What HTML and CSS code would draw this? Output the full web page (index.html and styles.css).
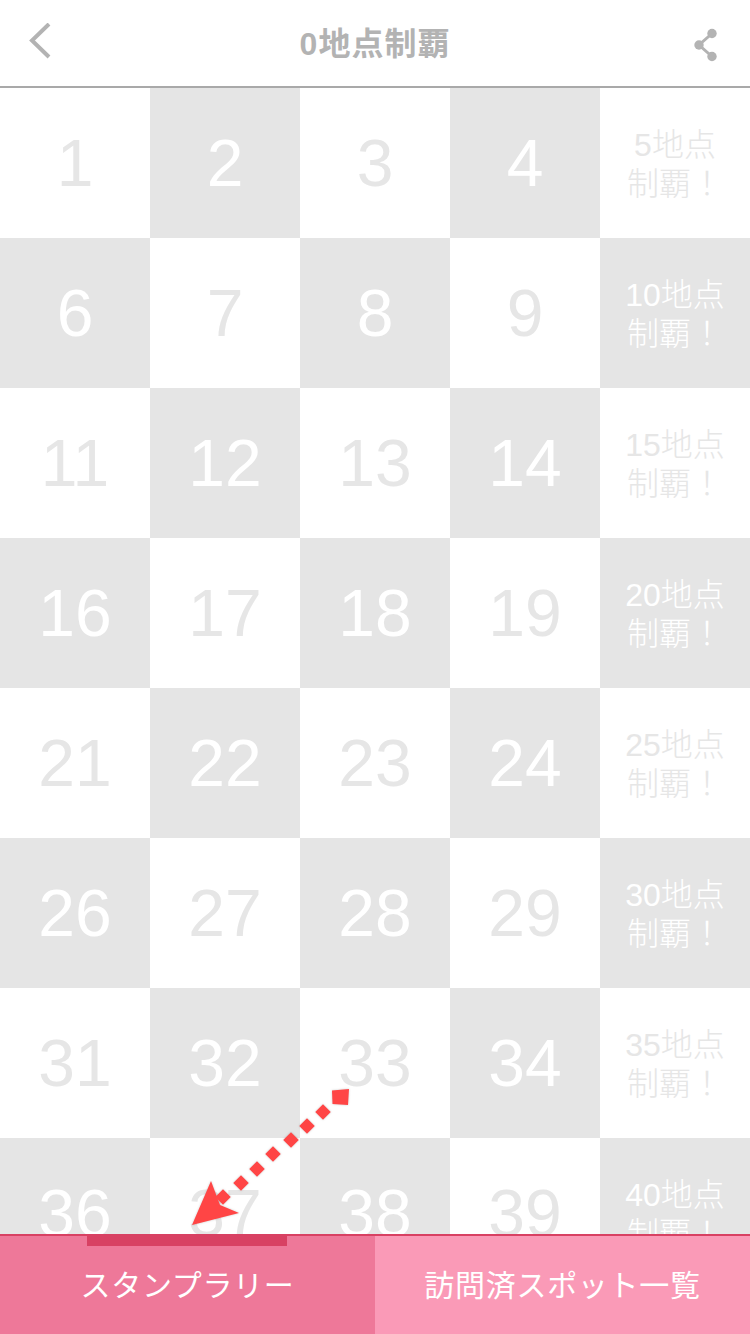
FILE: index.html
```html
<!DOCTYPE html>
<html lang="ja">
<head>
    <meta charset="UTF-8">
    <meta name="viewport" content="width=device-width, initial-scale=1.0">
    <title>0地点制覇</title>
    <link rel="stylesheet" href="styles.css">
</head>
<body>
    <div class="page">
        <header class="nav-bar">
            <svg class="nav-icon" width="28" height="36" viewBox="0 0 28 36">
                <path d="M21 1 L4 17.5 L21 34" fill="none" stroke="#b3b3b3" stroke-width="4"/>
            </svg>
            <h1 class="nav-title">0地点制覇</h1>
            <svg class="nav-icon nav-share" width="28" height="36" viewBox="0 0 28 36">
                <path d="M18 6.5 L5 18 L18 29.5" fill="none" stroke="#b3b3b3" stroke-width="3"/>
                <circle cx="18" cy="6.5" r="4.7" fill="#b3b3b3"/>
                <circle cx="5" cy="18" r="4.7" fill="#b3b3b3"/>
                <circle cx="18" cy="29.5" r="4.7" fill="#b3b3b3"/>
            </svg>
        </header>

        <main class="stamp-area">
            <div class="stamp-grid">
                <div class="cell">1</div><div class="cell">2</div><div class="cell">3</div><div class="cell">4</div>
                <div class="cell goal">5地点<br>制覇！</div>
                <div class="cell">6</div><div class="cell">7</div><div class="cell">8</div><div class="cell">9</div>
                <div class="cell goal">10地点<br>制覇！</div>
                <div class="cell">11</div><div class="cell">12</div><div class="cell">13</div><div class="cell">14</div>
                <div class="cell goal">15地点<br>制覇！</div>
                <div class="cell">16</div><div class="cell">17</div><div class="cell">18</div><div class="cell">19</div>
                <div class="cell goal">20地点<br>制覇！</div>
                <div class="cell">21</div><div class="cell">22</div><div class="cell">23</div><div class="cell">24</div>
                <div class="cell goal">25地点<br>制覇！</div>
                <div class="cell">26</div><div class="cell">27</div><div class="cell">28</div><div class="cell">29</div>
                <div class="cell goal">30地点<br>制覇！</div>
                <div class="cell">31</div><div class="cell">32</div><div class="cell">33</div><div class="cell">34</div>
                <div class="cell goal">35地点<br>制覇！</div>
                <div class="cell">36</div><div class="cell">37</div><div class="cell">38</div><div class="cell">39</div>
                <div class="cell goal">40地点<br>制覇！</div>
            </div>

            <!-- annotation arrow over the grid, coordinates relative to stamp-area -->
            <svg class="arrow" width="190" height="146" viewBox="0 0 190 146">
                <polygon points="169,2.5 186,1 185,17 169.5,16" fill="#ff4545"/>
                <g fill="#ff4545">
                    <rect x="-5.5" y="-5.5" width="11" height="11" transform="translate(160 24) rotate(45)"/>
                    <rect x="-5.5" y="-5.5" width="11" height="11" transform="translate(144 38) rotate(45)"/>
                    <rect x="-5.5" y="-5.5" width="11" height="11" transform="translate(128 52) rotate(45)"/>
                    <rect x="-5.5" y="-5.5" width="11" height="11" transform="translate(110 66) rotate(45)"/>
                    <rect x="-5.5" y="-5.5" width="11" height="11" transform="translate(94 81) rotate(45)"/>
                    <rect x="-5.5" y="-5.5" width="11" height="11" transform="translate(78 95) rotate(45)"/>
                    <rect x="-5.5" y="-5.5" width="11" height="11" transform="translate(60 109) rotate(45)"/>
                </g>
                <polygon points="48,93 29,137 76,125 57,117" fill="#ff4545"/>
            </svg>
        </main>

        <nav class="tab-bar">
            <div class="tab tab-active">スタンプラリー</div>
            <div class="tab">訪問済スポット一覧</div>
        </nav>
    </div>
</body>
</html>
```

FILE: styles.css
```css
body {
    margin: 0;
    font-family: "Liberation Sans", "Noto Sans CJK JP", sans-serif;
}
.page {
    display: flex;
    flex-direction: column;
    height: 1334px;
    overflow: hidden;
    background-color: #fff;
}
.nav-bar {
    flex: none;
    height: 82px;
    display: flex;
    justify-content: space-between;
    align-items: center;
    padding: 0 28px 4px;
    border-bottom: 2px solid #a9a9a9;
}
.nav-icon {
    display: block;
}
.nav-share {
    margin-top: 8px;
}
.nav-title {
    margin: 0;
    font-size: 32px;
    font-weight: bold;
    letter-spacing: 1px;
    color: #b3b3b3;
}
.stamp-area {
    flex: 1;
    position: relative;
    overflow: hidden;
}
.stamp-grid {
    display: grid;
    grid-template-columns: repeat(5, 150px);
    grid-auto-rows: 150px;
}
.cell {
    display: flex;
    justify-content: center;
    align-items: center;
    text-align: center;
    box-sizing: border-box;
    font-size: 66px;
    color: #e6e6e6;
    background-color: #fff;
}
.cell:nth-child(even) {
    color: #fff;
    background-color: #e5e5e5;
}
.cell.goal {
    font-size: 32px;
    font-weight: 300;
    line-height: 39px;
    padding-top: 4px;
}
.arrow {
    position: absolute;
    left: 163px;
    top: 1000px;
    filter: drop-shadow(0 0 1px rgba(0, 0, 0, 0.2));
}
.tab-bar {
    flex: none;
    height: 98px;
    display: flex;
    border-top: 2px solid #d84163;
}
.tab {
    flex: 1;
    display: flex;
    justify-content: center;
    align-items: center;
    padding-bottom: 4px;
    font-size: 30px;
    letter-spacing: 0.7px;
    color: #fff;
    background-color: #fa9ab7;
}
.tab-active {
    position: relative;
    background-color: #ee7899;
}
.tab-active::before {
    content: "";
    position: absolute;
    top: 0;
    left: 87px;
    width: 200px;
    height: 10px;
    background-color: #d84163;
}
```
